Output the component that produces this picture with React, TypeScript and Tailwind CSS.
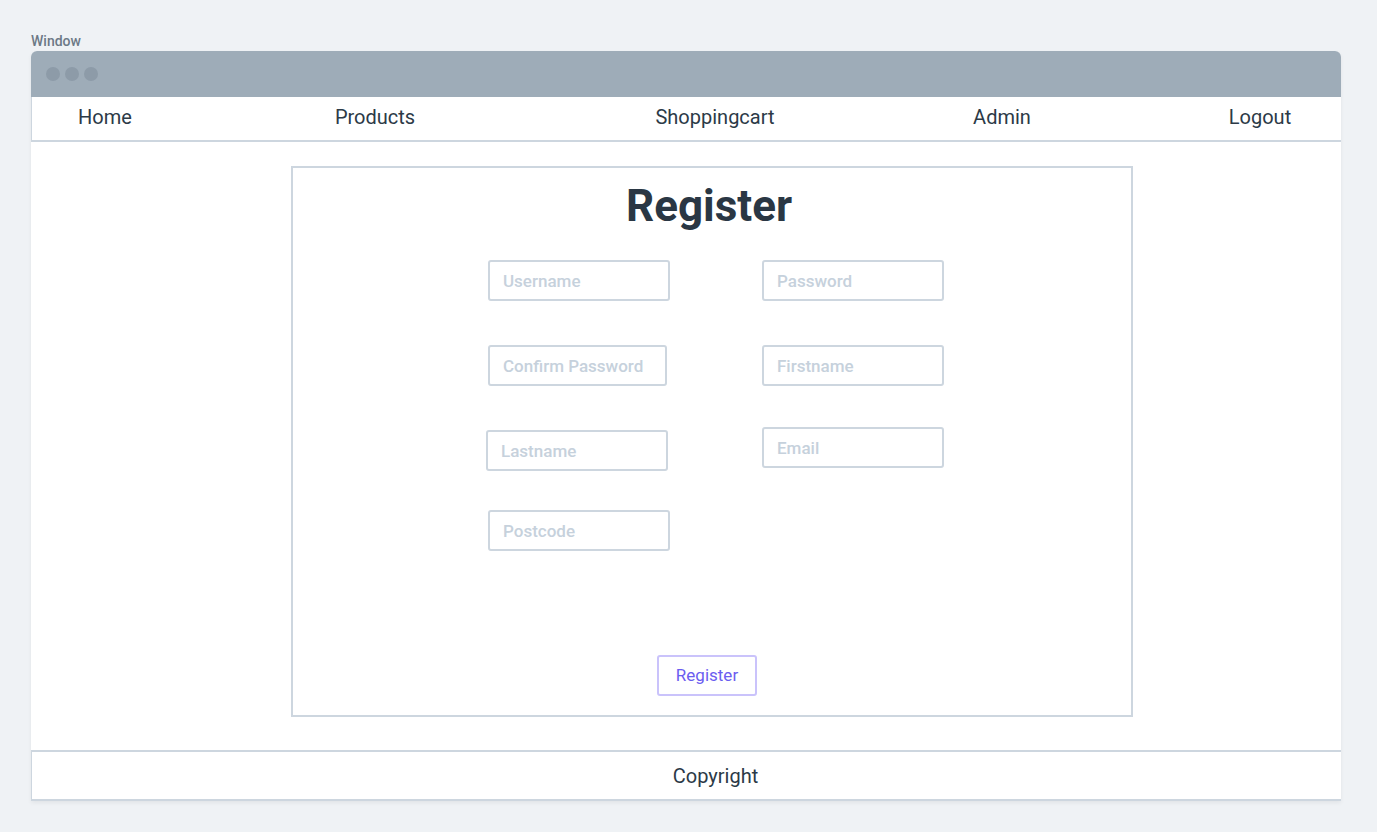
import React from 'react';

const navItems = [
  { label: 'Home', gap: 'ml-[3px]' },
  { label: 'Products', gap: 'ml-[130px]' },
  { label: 'Shoppingcart', gap: 'ml-[200px]' },
  { label: 'Admin', gap: 'ml-[147px]' },
  { label: 'Logout', gap: 'ml-[118px]' },
];

function Field({ placeholder, className = 'w-[182px]' }: { placeholder: string; className?: string }) {
  return (
    <input
      type="text"
      placeholder={placeholder}
      className={`h-[41px] rounded-[3px] border-2 border-[#cdd6df] bg-white px-[13px] text-[17px] font-medium text-[#2c3a47] placeholder:text-[#c6d1dc] outline-none ${className}`}
    />
  );
}

export default function App() {
  return (
    <main className="min-h-screen bg-[#eff2f5] px-[31px] pt-[33px] font-['Roboto',sans-serif]">
      <div className="text-[14px] font-medium leading-[17px] text-[#6c7986] mb-[1px]">Window</div>
      {/* Window frame */}
      <div className="w-[1310px] rounded-t-[6px] bg-white shadow-[0_2px_4px_rgba(0,0,0,0.06)]">
        <div className="flex h-[46px] items-center gap-[5px] rounded-t-[6px] bg-[#9eacb8] pl-[15px]">
          <span className="h-[14px] w-[14px] rounded-full bg-[#8d9ba8]" />
          <span className="h-[14px] w-[14px] rounded-full bg-[#8d9ba8]" />
          <span className="h-[14px] w-[14px] rounded-full bg-[#8d9ba8]" />
        </div>
        {/* Nav */}
        <nav className="flex h-[45px] items-center border-b-2 border-l border-[#cdd6df] pb-[3px] text-[20px] text-[#2c3a47]">
          {navItems.map(item => (
            <span key={item.label} className={`w-[140px] shrink-0 text-center ${item.gap}`}>
              {item.label}
            </span>
          ))}
        </nav>
        {/* Content */}
        <section className="pt-[24px] pb-[33px]">
          <div className="ml-[260px] w-[842px] border-2 border-[#cdd6df] pt-[13px] pb-[19px]">
            <h1 className="ml-[-6px] text-center text-[44px] font-bold leading-[50px] text-[#2a3744]">Register</h1>
            <div className="ml-[195px] mt-[29px] grid w-[457px] grid-cols-[182px_182px] gap-x-[92px]">
              <Field placeholder="Username" />
              <Field placeholder="Password" />
              <Field placeholder="Confirm Password" className="mt-[44px] w-[179px]" />
              <Field placeholder="Firstname" className="mt-[44px] w-[182px]" />
              <Field placeholder="Lastname" className="mt-[44px] ml-[-2px] w-[182px]" />
              <Field placeholder="Email" className="mt-[41px] w-[182px]" />
              <Field placeholder="Postcode" className="mt-[39px] w-[182px]" />
            </div>
            <div className="mt-[104px] flex justify-center pr-[10px]">
              <button className="h-[41px] w-[100px] rounded-[3px] border-2 border-[#cac3fb] text-[17px] text-[#6b5df0]">
                Register
              </button>
            </div>
          </div>
        </section>
        {/* Footer */}
        <footer className="flex h-[51px] items-center justify-center border-y-2 border-l border-[#cdd6df] pl-[58px] text-[20px] text-[#2c3a47]">
          Copyright
        </footer>
      </div>
    </main>
  );
}
